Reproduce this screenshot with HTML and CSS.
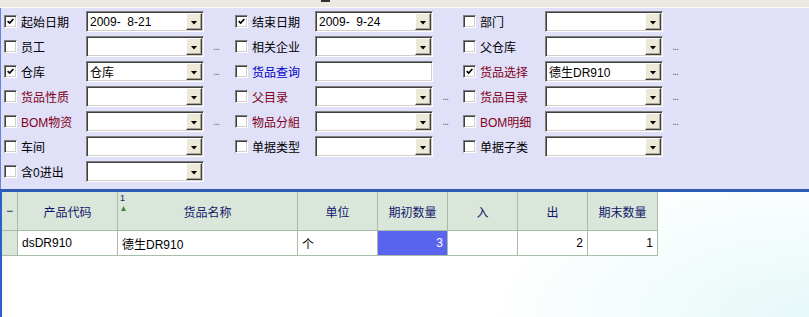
FILE: index.html
```html
<!DOCTYPE html>
<html lang="zh-CN">
<head>
    <meta charset="UTF-8">
    <title>货品进出查询</title>
    <link rel="stylesheet" href="styles.css">
</head>
<body>
    <div class="topbar"><span class="topmark"></span></div>

    <div class="filters">
        <!-- 第1行 -->
        <div class="field"><span class="chk on"><svg viewBox="0 0 11 11"><polyline points="2,5 4.5,7.5 9,2.5"/></svg></span><span class="lbl">起始日期</span></div>
        <div class="combo"><span class="val">2009-  8-21</span><span class="btn"></span></div>
        <div class="more"></div>
        <div class="field"><span class="chk on"><svg viewBox="0 0 11 11"><polyline points="2,5 4.5,7.5 9,2.5"/></svg></span><span class="lbl">结束日期</span></div>
        <div class="combo"><span class="val">2009-  9-24</span><span class="btn"></span></div>
        <div class="more"></div>
        <div class="field"><span class="chk"></span><span class="lbl">部门</span></div>
        <div class="combo"><span class="val"></span><span class="btn"></span></div>
        <div class="more"></div>

        <!-- 第2行 -->
        <div class="field"><span class="chk"></span><span class="lbl">员工</span></div>
        <div class="combo"><span class="val"></span><span class="btn"></span></div>
        <div class="more">...</div>
        <div class="field"><span class="chk"></span><span class="lbl">相关企业</span></div>
        <div class="combo"><span class="val"></span><span class="btn"></span></div>
        <div class="more"></div>
        <div class="field"><span class="chk"></span><span class="lbl">父仓库</span></div>
        <div class="combo"><span class="val"></span><span class="btn"></span></div>
        <div class="more">...</div>

        <!-- 第3行 -->
        <div class="field"><span class="chk on"><svg viewBox="0 0 11 11"><polyline points="2,5 4.5,7.5 9,2.5"/></svg></span><span class="lbl">仓库</span></div>
        <div class="combo"><span class="val">仓库</span><span class="btn"></span></div>
        <div class="more">...</div>
        <div class="field"><span class="chk"></span><span class="lbl blue">货品查询</span></div>
        <div class="combo text"><span class="val"></span></div>
        <div class="more"></div>
        <div class="field"><span class="chk on"><svg viewBox="0 0 11 11"><polyline points="2,5 4.5,7.5 9,2.5"/></svg></span><span class="lbl red">货品选择</span></div>
        <div class="combo"><span class="val">德生DR910</span><span class="btn"></span></div>
        <div class="more">...</div>

        <!-- 第4行 -->
        <div class="field"><span class="chk"></span><span class="lbl red">货品性质</span></div>
        <div class="combo"><span class="val"></span><span class="btn"></span></div>
        <div class="more"></div>
        <div class="field"><span class="chk"></span><span class="lbl red">父目录</span></div>
        <div class="combo"><span class="val"></span><span class="btn"></span></div>
        <div class="more">...</div>
        <div class="field"><span class="chk"></span><span class="lbl red">货品目录</span></div>
        <div class="combo"><span class="val"></span><span class="btn"></span></div>
        <div class="more">...</div>

        <!-- 第5行 -->
        <div class="field"><span class="chk"></span><span class="lbl red">BOM物资</span></div>
        <div class="combo"><span class="val"></span><span class="btn"></span></div>
        <div class="more">...</div>
        <div class="field"><span class="chk"></span><span class="lbl red">物品分組</span></div>
        <div class="combo"><span class="val"></span><span class="btn"></span></div>
        <div class="more">...</div>
        <div class="field"><span class="chk"></span><span class="lbl red">BOM明细</span></div>
        <div class="combo"><span class="val"></span><span class="btn"></span></div>
        <div class="more">...</div>

        <!-- 第6行 -->
        <div class="field"><span class="chk"></span><span class="lbl">车间</span></div>
        <div class="combo"><span class="val"></span><span class="btn"></span></div>
        <div class="more"></div>
        <div class="field"><span class="chk"></span><span class="lbl">单据类型</span></div>
        <div class="combo"><span class="val"></span><span class="btn"></span></div>
        <div class="more"></div>
        <div class="field"><span class="chk"></span><span class="lbl">单据子类</span></div>
        <div class="combo"><span class="val"></span><span class="btn"></span></div>
        <div class="more"></div>

        <!-- 第7行 -->
        <div class="field"><span class="chk"></span><span class="lbl">含0进出</span></div>
        <div class="combo"><span class="val"></span><span class="btn"></span></div>
        <div class="more"></div>
    </div>

    <div class="sheet">
        <div class="grid">
            <div class="hd ind">−</div>
            <div class="hd">产品代码</div>
            <div class="hd sorted"><span class="sort-no">1</span><span class="sort-arrow"></span>货品名称</div>
            <div class="hd">单位</div>
            <div class="hd">期初数量</div>
            <div class="hd">入</div>
            <div class="hd">出</div>
            <div class="hd">期末数量</div>

            <div class="cell ind"></div>
            <div class="cell">dsDR910</div>
            <div class="cell">德生DR910</div>
            <div class="cell">个</div>
            <div class="cell num sel">3</div>
            <div class="cell num"></div>
            <div class="cell num">2</div>
            <div class="cell num">1</div>
        </div>
    </div>
</body>
</html>
```

FILE: styles.css
```css
body {
    margin: 0;
    width: 809px;
    height: 317px;
    overflow: hidden;
    font-family: "Liberation Sans", "Noto Sans CJK SC", sans-serif;
    font-size: 12px;
    color: #000;
    background-color: #fff;
}

.topbar {
    height: 7px;
    background-color: #ece9e0;
    border-bottom: 1px solid #fafafa;
}

.topmark {
    display: block;
    margin-left: 321px;
    width: 9px;
    height: 2px;
    background-color: #303030;
}

/* 条件面板 */
.filters {
    display: grid;
    grid-template-columns: 82px 118px 31px 80px 118px 30px 82px 118px 40px;
    grid-auto-rows: 21px;
    row-gap: 4px;
    padding: 3px 0 7px 3px;
    background-color: #e0e0f8;
    border-left: 1px solid #6a82d8;
}

.field {
    display: flex;
    align-items: center;
    gap: 4px;
}

.chk {
    display: flex;
    align-items: center;
    justify-content: center;
    width: 13px;
    height: 13px;
    box-sizing: border-box;
    background-color: #fff;
    border: 1px solid;
    border-color: #808080 #fff #fff #808080;
    box-shadow: inset 1px 1px 0 #404040, inset -1px -1px 0 #d4d0c8;
}

.chk svg {
    width: 9px;
    height: 9px;
}

.chk polyline {
    fill: none;
    stroke: #000;
    stroke-width: 2;
}

.lbl {
    white-space: nowrap;
}

.lbl.red {
    color: #800020;
}

.lbl.blue {
    color: #0000c8;
}

.combo {
    display: flex;
    align-items: center;
    box-sizing: border-box;
    background-color: #fff;
    border: 1px solid;
    border-color: #808080 #fff #fff #808080;
    box-shadow: inset 1px 1px 0 #404040, inset -1px -1px 0 #d4d0c8;
    padding-left: 3px;
}

.val {
    white-space: pre;
    flex: 1;
}

.btn {
    display: flex;
    align-items: center;
    justify-content: center;
    width: 16px;
    align-self: stretch;
    margin: 1px 1px 1px 0;
    box-sizing: border-box;
    background-color: #ece9d8;
    border: 1px solid;
    border-color: #fff #404040 #404040 #fff;
    box-shadow: inset -1px -1px 0 #aca899;
}

.btn::after {
    content: "";
    width: 7px;
    height: 4px;
    margin-top: 2px;
    background-color: #000;
    clip-path: polygon(0 0, 100% 0, 50% 100%);
}

.more {
    padding-left: 9px;
    padding-top: 4px;
    color: #707070;
    font-size: 11px;
    letter-spacing: -1px;
}

/* 数据表格 */
.sheet {
    height: 125px;
    border-top: 3px solid #2c5cb4;
    border-left: 2px solid #2c5ed0;
    background: radial-gradient(ellipse 320px 150px at 100% 100%, #e6f8f8, #fff);
}

.grid {
    display: grid;
    grid-template-columns: 16px 100px 180px 80px 70px 70px 70px 70px;
    width: 656px;
}

.hd,
.cell {
    display: flex;
    align-items: center;
    box-sizing: border-box;
    border-right: 1px solid #a8bca8;
    border-bottom: 1px solid #a8bca8;
}

.hd {
    position: relative;
    height: 39px;
    justify-content: center;
    background-color: #dae6da;
    color: #10186a;
}

.cell {
    height: 25px;
    padding: 0 4px;
    background-color: #fff;
}

.cell.ind {
    background-color: #dae6da;
}

.cell.num {
    justify-content: flex-end;
}

.cell.sel {
    background-color: #5a64ee;
    color: #fff;
}

.sort-no {
    position: absolute;
    left: 2px;
    top: 1px;
    font-size: 9px;
    color: #10186a;
}

.sort-arrow {
    position: absolute;
    left: 3px;
    top: 14px;
    width: 5px;
    height: 5px;
    background-color: #3c8a3c;
    clip-path: polygon(50% 0, 100% 100%, 0 100%);
}
```
